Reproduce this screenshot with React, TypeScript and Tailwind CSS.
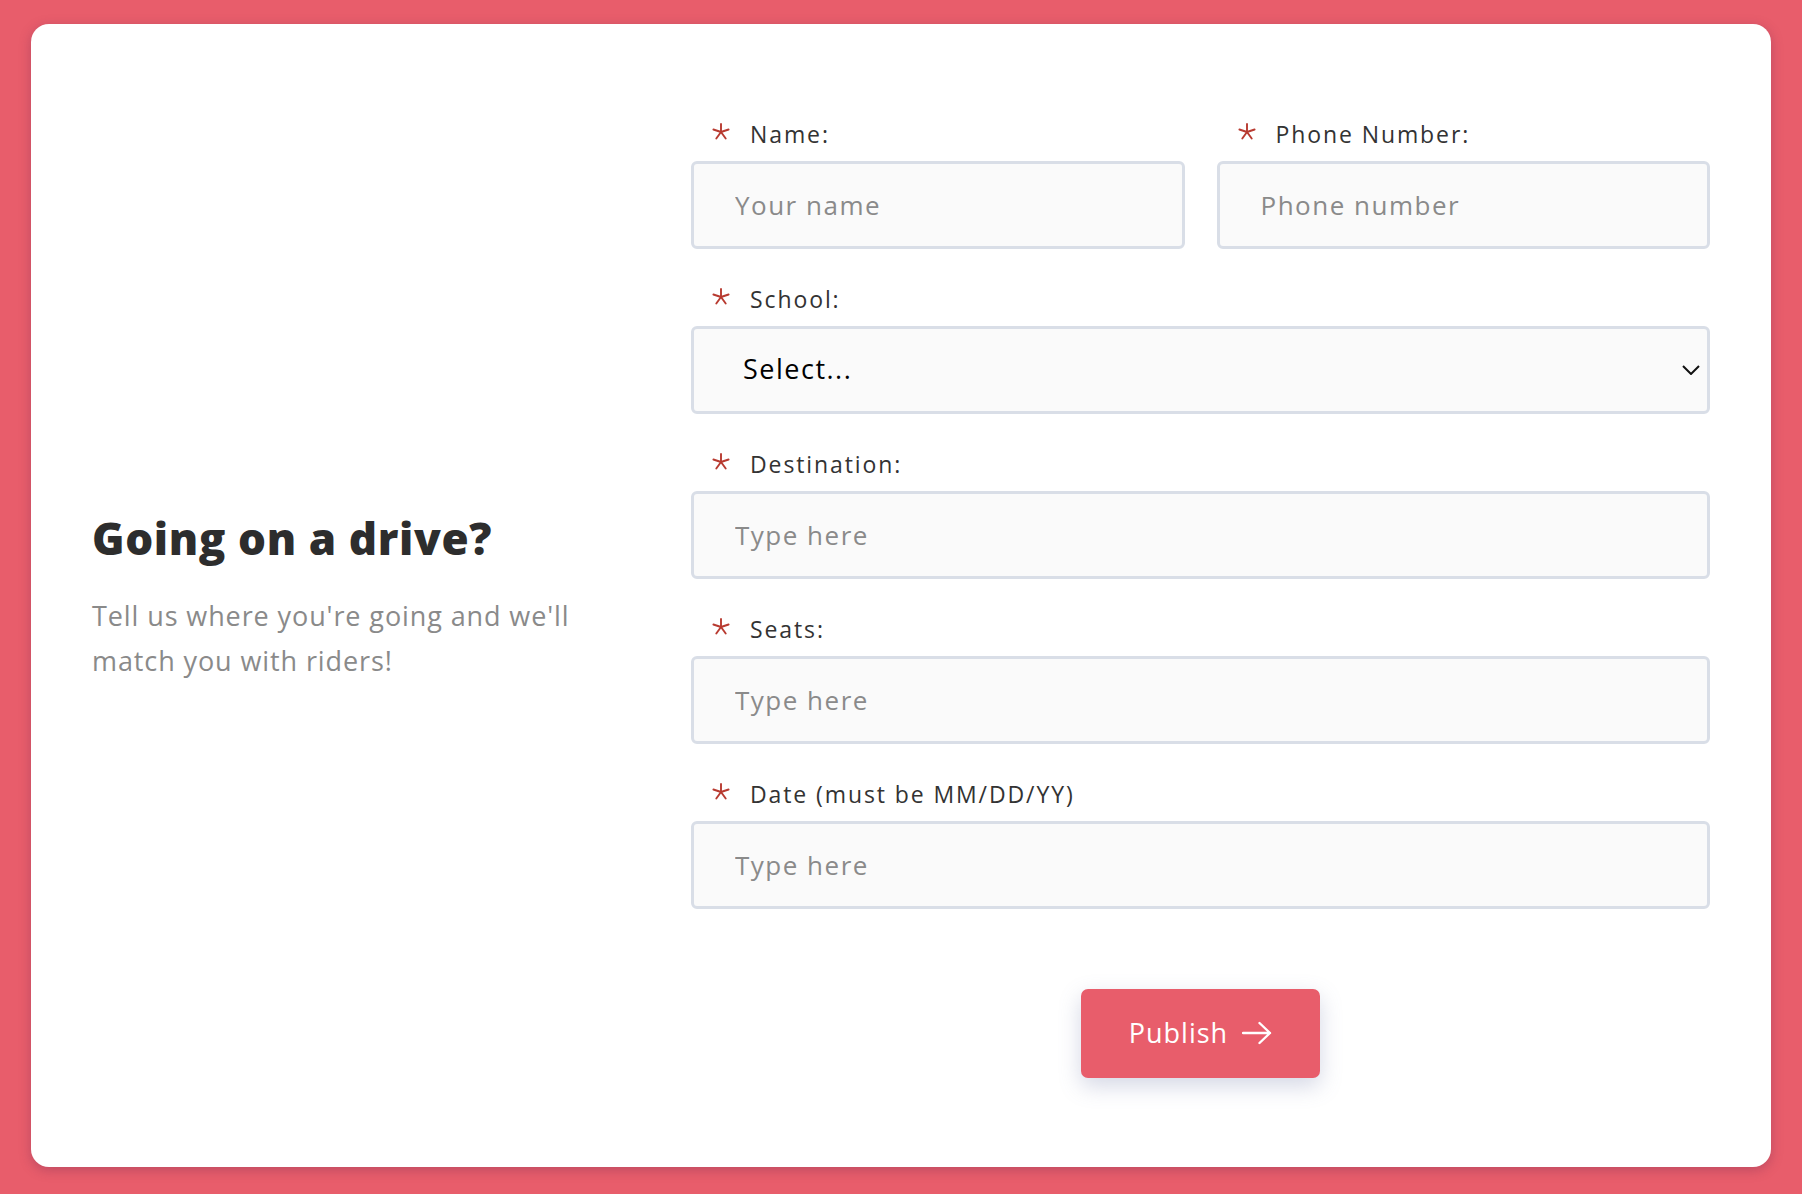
function Star() {
  return (
    <svg width="18" height="18" viewBox="0 0 18 18" className="shrink-0 -translate-y-[3px]">
      <g stroke="#b83a30" strokeWidth="1.9" strokeLinecap="round">
        <line x1="9" y1="9" x2="9" y2="1" />
        <line x1="9" y1="9" x2="16.6" y2="6.5" />
        <line x1="9" y1="9" x2="13.7" y2="15.5" />
        <line x1="9" y1="9" x2="4.3" y2="15.5" />
        <line x1="9" y1="9" x2="1.4" y2="6.5" />
      </g>
    </svg>
  );
}

function Label({ text }: { text: string }) {
  return (
    <div className="h-[30px] flex items-center gap-[20px] pl-[21px] mb-[11px]">
      <Star />
      <span className="text-[23px] text-[#333] tracking-[1.9px]">{text}</span>
    </div>
  );
}

const inputCls =
  'w-full h-[88px] rounded-[6px] border-[3px] border-[#d9dee7] bg-[#fafafa] pl-[41px] text-[26px] text-[#333] tracking-[1.5px] placeholder:text-[#8a8a8a] outline-none';

function Field({ label, placeholder, last }: { label: string; placeholder: string; last?: boolean }) {
  return (
    <div className={last ? '' : 'mb-[36px]'}>
      <Label text={label} />
      <input className={inputCls} placeholder={placeholder} />
    </div>
  );
}

export default function App() {
  return (
    <div className="min-h-screen bg-[#e85d6b] px-[31px] pt-[24px] pb-[27px] flex font-['Open_Sans',sans-serif]">
      <div className="flex-1 bg-white rounded-[18px] shadow-[0_3px_12px_rgba(110,40,80,0.35)] flex items-center px-[61px]">
        <div className="w-[599px] shrink-0 pt-[4px]">
          <h1 className="text-[44px] leading-[50px] font-extrabold text-[#2d2d2d] tracking-[0.6px]">Going on a drive?</h1>
          <p className="mt-[30px] w-[520px] text-[27px] leading-[45px] text-[#8a8a8a] tracking-[0.9px]">
            Tell us where you're going and we'll match you with riders!
          </p>
        </div>

        <form className="flex-1 flex flex-col pt-[6px]" onSubmit={(e) => e.preventDefault()}>
          <div className="grid grid-cols-2 gap-x-[32px]">
            <Field label="Name:" placeholder="Your name" />
            <Field label="Phone Number:" placeholder="Phone number" />
          </div>

          <div className="mb-[36px]">
            <Label text="School:" />
            <div className="relative">
              <select className="w-full h-[88px] appearance-none rounded-[6px] border-[3px] border-[#d9dee7] bg-[#fafafa] pl-[49px] text-[27px] font-medium text-black tracking-[1.5px] outline-none">
                <option>Select...</option>
              </select>
              <svg
                width="18"
                height="10"
                viewBox="0 0 18 10"
                className="absolute right-[10px] top-1/2 -translate-y-1/2 pointer-events-none"
              >
                <path d="M1 1l8 8 8-8" fill="none" stroke="#111" strokeWidth="2" />
              </svg>
            </div>
          </div>

          <Field label="Destination:" placeholder="Type here" />
          <Field label="Seats:" placeholder="Type here" />
          <Field label="Date (must be MM/DD/YY)" placeholder="Type here" last />

          <button
            type="submit"
            className="self-center mt-[80px] w-[239px] h-[89px] rounded-[7px] bg-[#e85d6b] text-white text-[27px] font-medium tracking-[1px] flex items-center justify-center gap-[14px] shadow-[0_8px_22px_rgba(100,110,160,0.28)]"
          >
            Publish
            <svg width="30" height="24" viewBox="0 0 30 24" className="shrink-0">
              <path d="M1 12h27M17.5 2l10.5 10-10.5 10" fill="none" stroke="#fff" strokeWidth="2.4" strokeLinecap="round" strokeLinejoin="round" />
            </svg>
          </button>
        </form>
      </div>
    </div>
  );
}
